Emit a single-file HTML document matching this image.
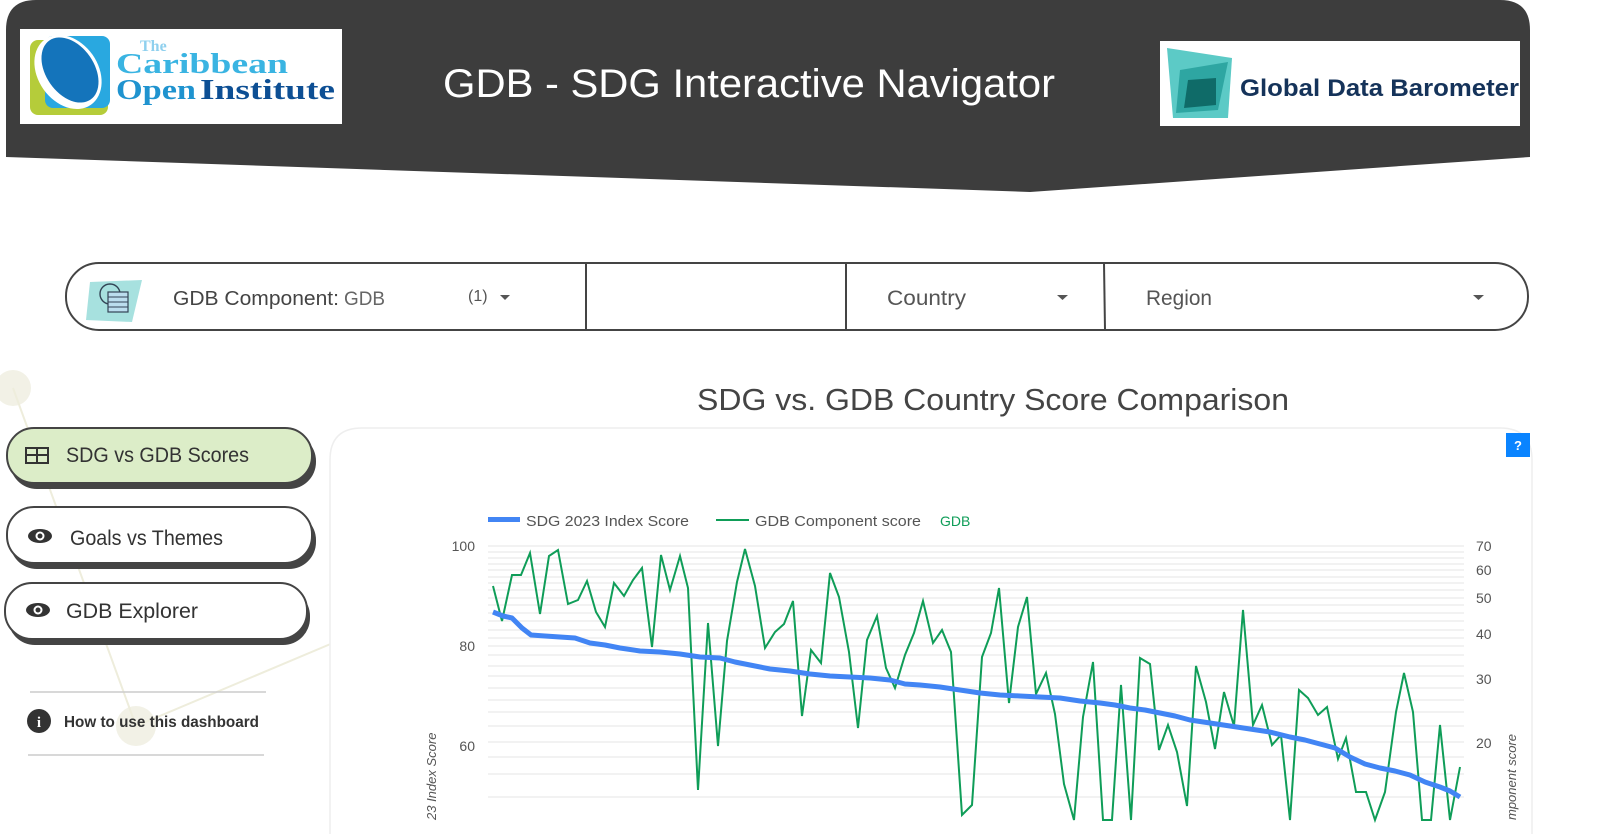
<!DOCTYPE html>
<html><head><meta charset="utf-8"><style>
html,body{margin:0;padding:0;background:#fff;width:100%;height:100%;overflow:hidden}
svg{display:block;position:absolute;left:0;top:0;width:100vw;height:100vh}
text{font-family:"Liberation Sans",sans-serif}
text.serif{font-family:"Liberation Serif",serif}
</style></head><body>
<svg viewBox="0 0 1600 834" preserveAspectRatio="none" xmlns="http://www.w3.org/2000/svg">
<circle cx="13" cy="388" r="18" fill="#f2f1e6"/>
<circle cx="136" cy="726" r="20" fill="#f2f1e6"/>
<path d="M13 388 L136 726 L340 640" stroke="#eeeddc" stroke-width="2" fill="none"/>
<path d="M6 30 Q6 0 36 0 L1500 0 Q1530 0 1530 30 L1530 157 L1030 192 L6 157 Z" fill="#3d3d3d"/>
<rect x="20" y="29" width="322" height="95" fill="#fff"/>
<rect x="30" y="40" width="78" height="75" rx="8" fill="#b5cc3a"/>
<rect x="45" y="36" width="65" height="72" rx="8" fill="#29a8e0"/>
<ellipse cx="68" cy="72" rx="30" ry="40" transform="rotate(-35 68 72)" fill="#fff"/>
<ellipse cx="70" cy="70" rx="24" ry="36" transform="rotate(-35 70 70)" fill="#1474bb"/>
<text class="serif" x="140" y="51" font-size="16" font-weight="bold" fill="#8fd0ee">The</text>
<text class="serif" x="116" y="73" font-size="29" font-weight="bold" fill="#3ab4e2" textLength="172" lengthAdjust="spacingAndGlyphs">Caribbean</text>
<text class="serif" x="116" y="99" font-size="29" font-weight="bold" fill="#1f93cf" textLength="80" lengthAdjust="spacingAndGlyphs">Open</text>
<text class="serif" x="200" y="99" font-size="29" font-weight="bold" fill="#0d4f94" textLength="135" lengthAdjust="spacingAndGlyphs">Institute</text>
<text x="749" y="97" font-size="40" fill="#fff" text-anchor="middle" textLength="612" lengthAdjust="spacingAndGlyphs">GDB - SDG Interactive Navigator</text>
<rect x="1160" y="41" width="360" height="85" fill="#fff"/>
<polygon points="1167,48 1232,58 1228,118 1173,118" fill="#5ccac6"/>
<polygon points="1180,70 1228,62 1218,110 1176,113" fill="#2ea6a2"/>
<polygon points="1188,80 1216,78 1216,105 1184,108" fill="#0f6b68"/>
<text x="1240" y="96" font-size="24" font-weight="bold" fill="#15335a" textLength="279" lengthAdjust="spacingAndGlyphs">Global Data Barometer</text>
<rect x="66" y="263" width="1462" height="67" rx="33" fill="#fff" stroke="#444" stroke-width="2"/>
<line x1="586" y1="263" x2="586" y2="330" stroke="#444" stroke-width="2"/>
<line x1="846" y1="263" x2="846" y2="330" stroke="#444" stroke-width="2"/>
<line x1="1104" y1="263" x2="1105" y2="330" stroke="#444" stroke-width="2"/>
<polygon points="90,282 142,280 132,322 86,320" fill="#a7e1df"/>
<circle cx="110" cy="294" r="10" fill="none" stroke="#345" stroke-width="1.4"/>
<rect x="108" y="292" width="20" height="20" fill="#bde" stroke="#345" stroke-width="1.2"/>
<path d="M108 297h20M108 302h20M108 307h20" stroke="#345" stroke-width="1"/>
<text x="173" y="305" font-size="20" fill="#444" textLength="166" lengthAdjust="spacingAndGlyphs">GDB Component:</text>
<text x="344" y="305" font-size="19" fill="#666" textLength="41" lengthAdjust="spacingAndGlyphs">GDB</text>
<text x="468" y="301" font-size="16" fill="#555">(1)</text>
<path d="M500 295 h10 l-5 5z" fill="#555"/>
<text x="887" y="305" font-size="21" fill="#555" textLength="79" lengthAdjust="spacingAndGlyphs">Country</text>
<path d="M1057 295 h11 l-5.5 5z" fill="#555"/>
<text x="1146" y="305" font-size="21" fill="#555" textLength="66" lengthAdjust="spacingAndGlyphs">Region</text>
<path d="M1473 295 h11 l-5.5 5z" fill="#555"/>
<rect x="10" y="434" width="306" height="55" rx="27" fill="#444"/>
<rect x="7" y="428" width="305" height="55" rx="27" fill="#dcedc8" stroke="#444" stroke-width="2"/>
<rect x="25" y="447" width="24" height="17" fill="#333"/>
<rect x="27" y="449" width="9" height="5" fill="#dcedc8"/><rect x="38" y="449" width="9" height="5" fill="#dcedc8"/>
<rect x="27" y="456" width="9" height="6" fill="#dcedc8"/><rect x="38" y="456" width="9" height="6" fill="#dcedc8"/>
<text x="66" y="462" font-size="21" fill="#333" textLength="183" lengthAdjust="spacingAndGlyphs">SDG vs GDB Scores</text>
<rect x="10" y="513" width="306" height="56" rx="27" fill="#444"/>
<rect x="7" y="507" width="305" height="56" rx="27" fill="#fff" stroke="#444" stroke-width="2"/>
<ellipse cx="40" cy="536" rx="12" ry="7" fill="#333"/><circle cx="40" cy="536" r="4.5" fill="#fff"/><circle cx="40" cy="536" r="2.5" fill="#333"/>
<text x="70" y="545" font-size="21" fill="#333" textLength="153" lengthAdjust="spacingAndGlyphs">Goals vs Themes</text>
<rect x="8" y="589" width="302" height="56" rx="27" fill="#444"/>
<rect x="5" y="583" width="302" height="56" rx="27" fill="#fff" stroke="#444" stroke-width="2"/>
<ellipse cx="38" cy="610" rx="12" ry="7" fill="#333"/><circle cx="38" cy="610" r="4.5" fill="#fff"/><circle cx="38" cy="610" r="2.5" fill="#333"/>
<text x="66" y="618" font-size="21" fill="#333" textLength="132" lengthAdjust="spacingAndGlyphs">GDB Explorer</text>
<line x1="30" y1="692" x2="266" y2="692" stroke="#ccc" stroke-width="1.5"/>
<line x1="28" y1="755" x2="264" y2="755" stroke="#ccc" stroke-width="1.5"/>
<circle cx="39" cy="721" r="12" fill="#333"/>
<text class="serif" x="39" y="727" font-size="15" font-weight="bold" fill="#fff" text-anchor="middle">i</text>
<text x="64" y="727" font-size="16" font-weight="bold" fill="#333" textLength="195" lengthAdjust="spacingAndGlyphs">How to use this dashboard</text>
<text x="993" y="410" font-size="31" fill="#444" text-anchor="middle" textLength="592" lengthAdjust="spacingAndGlyphs">SDG vs. GDB  Country Score Comparison</text>
<path d="M330 834 L330 460 Q330 428 362 428 L1500 428 Q1532 428 1532 460 L1532 834" fill="#fff" stroke="#eee" stroke-width="1.5"/>
<rect x="1506" y="433" width="24" height="24" fill="#0a84ff"/>
<text x="1518" y="450" font-size="13" font-weight="bold" fill="#fff" text-anchor="middle">?</text>
<rect x="488" y="517" width="32" height="5" fill="#4285f4"/>
<text x="526" y="526" font-size="15" fill="#555" textLength="163" lengthAdjust="spacingAndGlyphs">SDG 2023 Index Score</text>
<line x1="716" y1="520" x2="749" y2="520" stroke="#0f9d58" stroke-width="2"/>
<text x="755" y="526" font-size="15" fill="#555" textLength="166" lengthAdjust="spacingAndGlyphs">GDB Component score</text>
<text x="940" y="526" font-size="14" fill="#0f9d58">GDB</text>
<g stroke="#ebebeb" stroke-width="1.2">
<path d="M488 546H1464M488 552H1464M488 558H1464M488 564H1464M488 570H1464M488 577H1464M488 583H1464M488 590H1464M488 598H1464M488 605H1464M488 613H1464M488 621H1464M488 630H1464M488 638H1464M488 646H1464M488 655H1464M488 666H1464M488 676H1464M488 688H1464M488 700H1464M488 712H1464M488 726H1464M488 742H1464M488 757H1464M488 774H1464M488 797H1464"/>
</g>
<g font-size="14" fill="#555">
<text x="475" y="551" text-anchor="end">100</text>
<text x="475" y="651" text-anchor="end">80</text>
<text x="475" y="751" text-anchor="end">60</text>
<text x="1476" y="551">70</text><text x="1476" y="575">60</text><text x="1476" y="603">50</text>
<text x="1476" y="639">40</text><text x="1476" y="684">30</text><text x="1476" y="748">20</text>
</g>
<text transform="translate(436 820) rotate(-90)" font-size="13" font-style="italic" fill="#555">23 Index Score</text>
<text transform="translate(1516 820) rotate(-90)" font-size="13" font-style="italic" fill="#555">mponent score</text>
<polyline fill="none" stroke="#0f9d58" stroke-width="2" points="493,586 502,621 512,575 521,575 530,553 540,614 549,556 558,550 568,604 578,600 587,581 596,612 605,627 614,583 624,596 633,580 642,568 652,647 661,555 670,590 680,556 688,588 698,790 708,623 718,746 727,641 737,582 745,549 755,586 765,648 775,632 784,624 793,601 802,716 811,650 821,663 830,573 839,597 849,652 858,728 867,640 877,616 886,668 895,688 905,655 914,633 923,601 933,643 942,630 951,652 962,815 972,805 982,657 991,633 999,588 1009,703 1018,627 1027,597 1036,694 1046,673 1055,714 1064,784 1074,820 1083,717 1093,662 1103,820 1112,820 1121,685 1131,820 1140,658 1150,664 1159,750 1168,725 1177,752 1187,806 1196,666 1206,702 1215,749 1224,692 1234,726 1243,610 1253,725 1262,705 1272,745 1281,735 1290,820 1299,690 1308,698 1318,715 1327,707 1338,759 1346,738 1356,792 1366,792 1375,820 1385,792 1396,712 1404,673 1413,712 1422,820 1431,820 1440,725 1450,820 1460,767"/>
<polyline fill="none" stroke="#4285f4" stroke-width="5" stroke-linejoin="round" points="493,612 503,616 512,618 522,628 531,635 545,636 560,637 575,638 590,643 605,645 620,648 640,651 660,652 680,654 700,657 720,658 735,662 750,665 770,669 790,671 810,674 830,676 850,677 870,678 890,680 905,684 920,685 940,687 960,690 980,693 1000,695 1020,696 1040,697 1060,698 1080,701 1100,703 1115,705 1130,708 1145,710 1160,713 1175,716 1190,720 1210,723 1230,726 1250,729 1270,732 1290,737 1305,740 1320,744 1335,748 1350,757 1365,764 1380,768 1395,771 1410,775 1425,782 1440,787 1450,791 1460,797"/>
</svg>
</body></html>
